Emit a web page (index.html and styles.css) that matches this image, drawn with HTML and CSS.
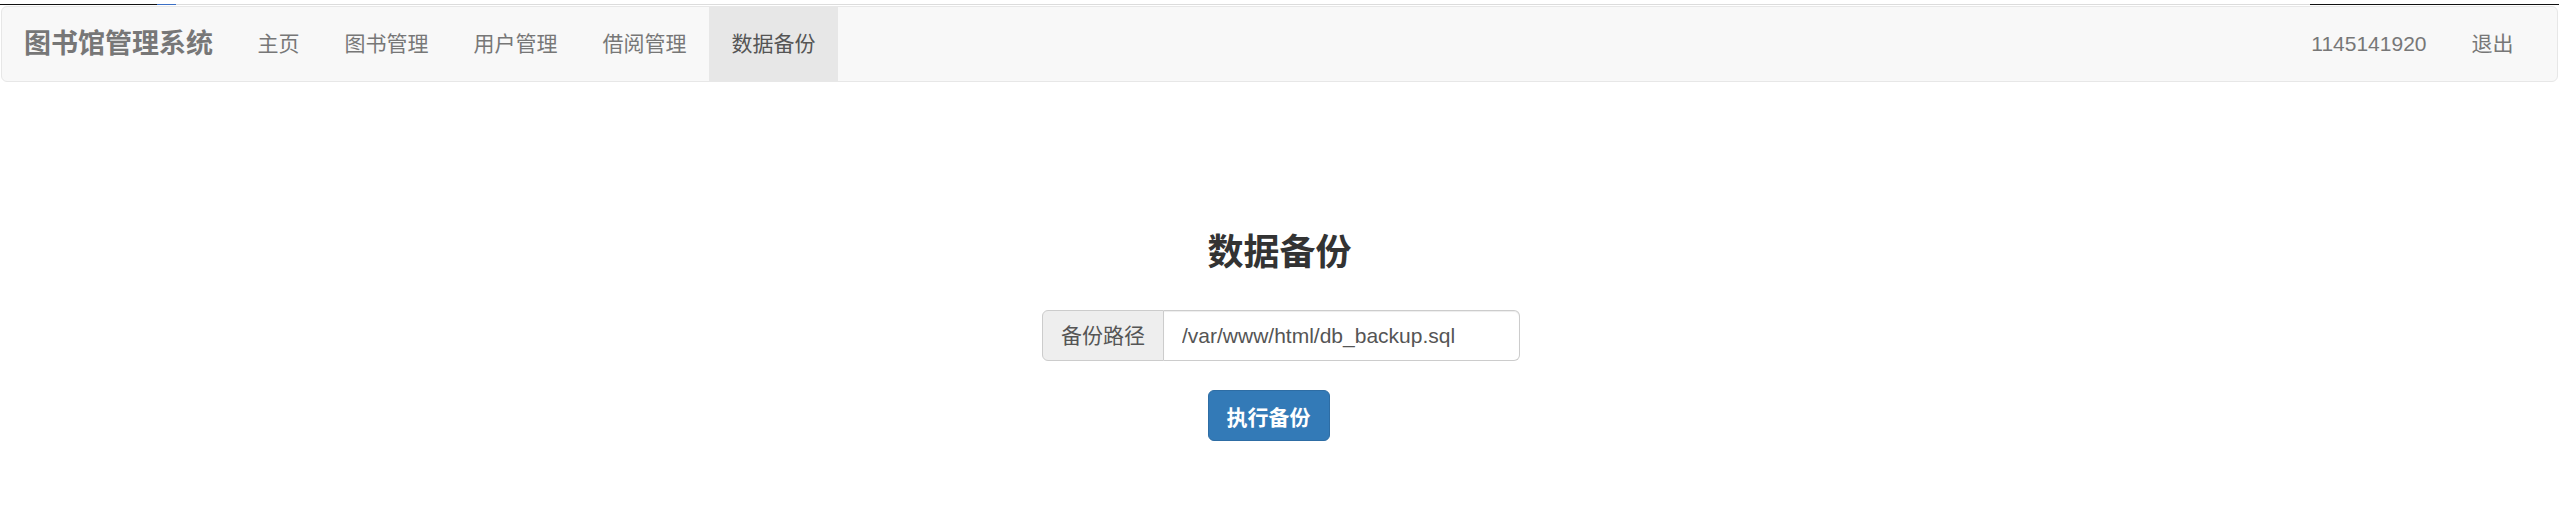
FILE: index.html
```html
<!DOCTYPE html>
<html lang="zh-CN">
<head>
<meta charset="utf-8">
<title>数据备份 - 图书馆管理系统</title>
<link rel="stylesheet" href="styles.css">
</head>
<body>
<div class="topstrip">
  <span class="seg seg-dark-left"></span>
  <span class="seg seg-blue"></span>
  <span class="seg seg-light"></span>
  <span class="seg seg-dark-right"></span>
</div>
<nav class="navbar">
  <a class="brand" href="#">图书馆管理系统</a>
  <ul class="nav">
    <li><a href="#">主页</a></li>
    <li><a href="#">图书管理</a></li>
    <li><a href="#">用户管理</a></li>
    <li><a href="#">借阅管理</a></li>
    <li class="active"><a href="#">数据备份</a></li>
  </ul>
  <ul class="nav nav-right">
    <li><a href="#">1145141920</a></li>
    <li><a href="#">退出</a></li>
  </ul>
</nav>
<main class="content">
  <h3 class="title">数据备份</h3>
  <form class="backup-form">
    <div class="input-group">
      <span class="addon">备份路径</span>
      <input class="path-input" type="text" value="/var/www/html/db_backup.sql">
    </div>
    <button class="btn-primary" type="button">执行备份</button>
  </form>
</main>
</body>
</html>
```

FILE: styles.css
```css
html, body {
  margin: 0;
  padding: 0;
  background: #fff;
}
body {
  font-family: "Liberation Sans", "Noto Sans CJK SC", sans-serif;
  font-size: 21px;
  line-height: 30px;
  color: #333;
}
.topstrip {
  height: 6px;
  display: flex;
  align-items: flex-start;
  padding-top: 4px;
  box-sizing: border-box;
}
.seg {
  display: block;
  height: 1px;
  background: #dcdcdc;
}
.seg-dark-left {
  width: 157px;
  background: #111;
}
.seg-blue {
  width: 19px;
  background: #3b6fc4;
}
.seg-light {
  flex: 1;
}
.seg-dark-right {
  width: 249px;
  background: #111;
}
.navbar {
  display: flex;
  align-items: stretch;
  height: 74px;
  margin: 0 1px;
  background: #f8f8f8;
  border: 1px solid #e7e7e7;
  border-radius: 6px;
}
.brand {
  display: block;
  padding: 0 22px;
  font-size: 27px;
  font-weight: bold;
  line-height: 74px;
  color: #777;
  text-decoration: none;
}
.nav {
  display: flex;
  list-style: none;
  margin: 0;
  padding: 0;
}
.nav li a {
  display: block;
  padding: 0 22.5px;
  line-height: 74px;
  color: #777;
  text-decoration: none;
}
.nav li.active a {
  background: #e7e7e7;
  color: #555;
}
.nav-right {
  margin-left: auto;
  padding-right: 21px;
}
.content {
  display: flex;
  flex-direction: column;
  align-items: center;
  padding-top: 151px;
}
.title {
  margin: 0;
  font-size: 36px;
  line-height: 40px;
  font-weight: bold;
  color: #333;
}
.backup-form {
  display: flex;
  flex-direction: column;
  align-items: center;
  margin-top: 37px;
}
.input-group {
  display: flex;
  height: 51px;
  margin-left: 3px;
}
.addon {
  display: flex;
  align-items: center;
  padding: 0 18px;
  background: #eee;
  border: 1px solid #ccc;
  border-right: 1px solid #ccc;
  border-radius: 6px 0 0 6px;
  color: #555;
  font-size: 21px;
}
.path-input {
  width: 356px;
  box-sizing: border-box;
  height: 51px;
  padding: 0 18px;
  border: 1px solid #ccc;
  border-left: 0;
  border-radius: 0 6px 6px 0;
  font-family: "Liberation Sans", "Noto Sans CJK SC", sans-serif;
  font-size: 21px;
  color: #555;
  background: #fff;
  box-shadow: inset 0 1px 1px rgba(0,0,0,.075);
  outline: none;
}
.btn-primary {
  margin-top: 29px;
  margin-right: 22px;
  height: 51px;
  padding: 0 18px;
  background: #337ab7;
  border: 1px solid #2e6da4;
  border-radius: 6px;
  color: #fff;
  font-family: "Liberation Sans", "Noto Sans CJK SC", sans-serif;
  font-size: 21px;
  font-weight: bold;
  cursor: pointer;
}
```
